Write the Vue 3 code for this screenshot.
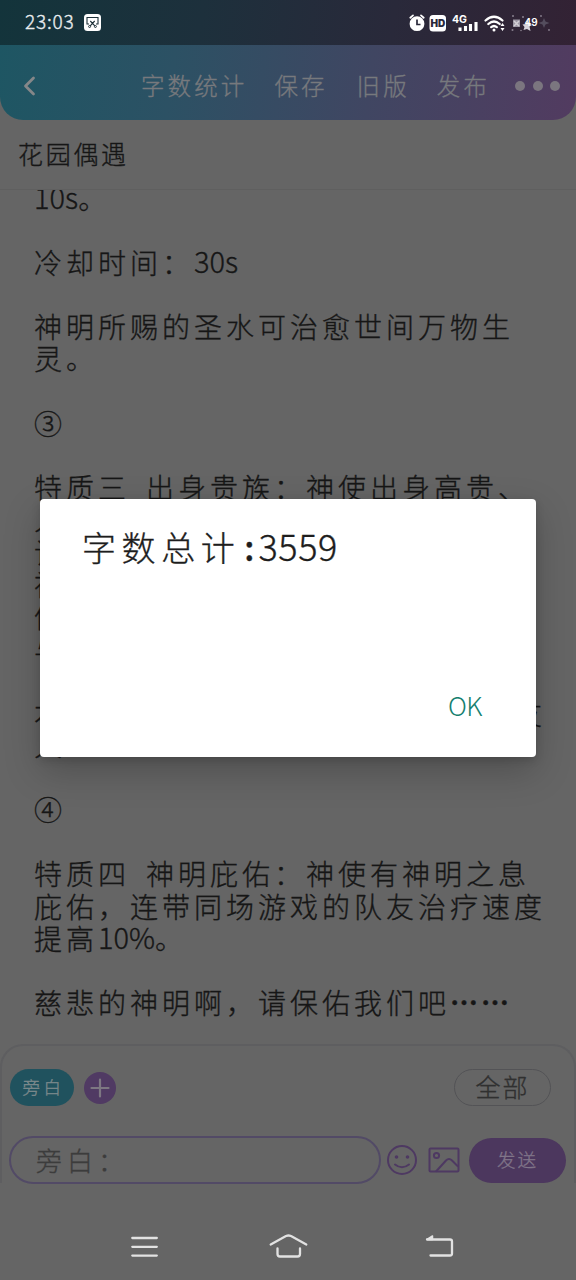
<script setup>
const actions = ['字数统计', '保存', '旧版', '发布']

// Each line is a list of runs; runs starting with "~" are set in the narrow Latin face.
const lines = [
  ['~10s', '。'],
  [],
  ['冷却时间：', '~30s'],
  [],
  ['神明所赐的圣水可治愈世间万物生'],
  ['灵。'],
  [],
  ['③'],
  [],
  ['特质三', '~ ', '出身贵族：神使出身高贵、'],
  ['人'],
  ['让'],
  ['神'],
  ['信'],
  ['与'],
  [],
  ['本次神使的祝福会降临在每一位队友'],
  ['人'],
  [],
  ['④'],
  [],
  ['特质四', '~ ', '神明庇佑：神使有神明之息'],
  ['庇佑，连带同场游戏的队友治疗速度'],
  ['提高', '~10%', '。'],
  [],
  ['慈悲的神明啊，请保佑我们吧', '……']
]
const isLatin = (run) => run.startsWith('~')
const textOf = (run) => (isLatin(run) ? run.slice(1) : run)
</script>

<template>
  <div class="screen">
    <div class="status">
      <span class="clock">23:03</span>
      <svg class="shot" width="17" height="17" viewBox="0 0 17 17">
        <rect width="17" height="17" rx="3.5" fill="#fff" />
        <path d="M5 10H3V3.5h11V10h-2M6.300 7l4.500 4.800M10.700 7l-4.500 4.800" fill="none" stroke="#1d3038" stroke-width="1.1" />
        <circle cx="5.600" cy="12.500" r="1" fill="none" stroke="#1d3038" />
        <circle cx="11.400" cy="12.500" r="1" fill="none" stroke="#1d3038" />
      </svg>
      <svg class="tray" width="145" height="20" viewBox="0 0 145 20">
        <circle cx="8" cy="10.700" r="7.400" fill="#fff" />
        <path d="M1.300 4.700 4 2.400M12 2.400l2.700 2.300" stroke="#fff" stroke-width="1.800" stroke-linecap="round" />
        <path d="M8 6.500v5h3.500" fill="none" stroke="#29283a" stroke-width="1.700" />
        <rect x="20.500" y="2" width="16.500" height="16.500" rx="3.500" fill="#fff" />
        <text x="28.800" y="14" text-anchor="middle" class="hd">HD</text>
        <text x="43" y="9.500" class="net">4G</text>
        <path d="M51 14.500v3.500M56.500 13V18M61.500 11v7M67 9v9" stroke="#fff" stroke-width="3.100" />
        <g fill="none" stroke="#fff" stroke-width="2.200" stroke-linecap="round">
          <path d="M76.500 7.500q8.500-7.500 17 0M79.300 11q5.700-5 11.400 0M82.200 14.200q2.800-2.400 5.600 0" />
        </g>
        <circle cx="85" cy="17" r="1.500" fill="#fff" />
        <path d="M93.500 10l2 3h-4zM93.500 18l2-3h-4z" fill="#fff" />
        <rect x="104" y="6.500" width="7" height="7.500" fill="#9a95a2" />
        <path d="M105 8l5 5M110 8l-5 5" stroke="#d2cfd5" stroke-width="1.500" />
        <g fill="#89818f">
          <circle cx="104" cy="3" r="1" /><circle cx="103.500" cy="17" r="1" />
          <circle cx="114" cy="4" r="1" /><circle cx="112" cy="17.500" r=".8" /><circle cx="132" cy="3" r=".9" />
          <circle cx="140" cy="17" r=".9" />
        </g>
        <path d="m118.500 7 1.500 3 3 2-2.500 1.500 1 4.500-3.500-2-3.500 1 1-3-2-2.500 3.500-.5z" fill="#d8d5dc" />
        <text x="115.500" y="12.500" class="pct">49</text>
        <path d="m135 5 1.500 3.500 4 1.500-4 1.500-1.500 3.500-1.500-3.500-4-1.500 4-1.500z" fill="#544d5d" />
      </svg>
    </div>

    <div class="header">
      <svg class="back" width="14" height="20" viewBox="0 0 14 20">
        <path d="M11.500 2 3.500 10l8 8" fill="none" stroke="#858789" stroke-width="2.800" stroke-linecap="round" stroke-linejoin="round" />
      </svg>
      <div class="actions">
        <span v-for="a in actions" :key="a">{{ a }}</span>
      </div>
      <div class="dots"><i></i><i></i><i></i></div>
    </div>

    <div class="title">花园偶遇</div>

    <div class="story">
      <div v-for="(line, i) in lines" :key="i" class="line">
        <span v-for="(run, j) in line" :key="j" :class="{ latin: isLatin(run), ell: run === '……' }">{{ textOf(run) }}</span>
      </div>
    </div>

    <div class="composer">
      <div class="roles">
        <span class="role">旁白</span>
        <svg width="32" height="32" viewBox="0 0 32 32">
          <circle cx="16" cy="16" r="16" fill="#503a63" />
          <path d="M7.500 16h17M16 7.500v17" stroke="#7d7782" stroke-width="2.200" stroke-linecap="round" />
        </svg>
        <span class="all">全部</span>
      </div>
      <div class="entry">
        <div class="field">旁白：</div>
        <svg class="smile" width="32" height="32" viewBox="0 0 32 32" fill="none" stroke="#4e3962" stroke-width="2">
          <circle cx="16" cy="16" r="14" />
          <path d="M9 20.500q7 5.500 14 0" stroke-linecap="round" />
          <circle cx="10.500" cy="13" r="1.800" fill="#4e3962" stroke="none" />
          <circle cx="21.500" cy="13" r="1.800" fill="#4e3962" stroke="none" />
        </svg>
        <svg class="photo" width="32" height="26" viewBox="0 0 32 26" fill="none" stroke="#4e3962" stroke-width="2">
          <rect x="1.500" y="1.500" width="29" height="23" rx="1" />
          <circle cx="8.500" cy="8.500" r="2.600" />
          <path d="M8 24.500 18 13.500q3-3 6 0l6 6" />
        </svg>
        <span class="send">发送</span>
      </div>
    </div>

    <div class="nav">
      <svg width="576" height="95" viewBox="0 0 576 95" fill="none" stroke="#e2e2e2" stroke-width="2.300" stroke-linecap="round" stroke-linejoin="round">
        <path d="M132.300 54h24.500M132.300 62.800h24.500M132.300 71.600h24.500" />
        <path d="M270.700 60.500 286 52q2.500-1 5 0l15.300 8.500M277.500 64.500V70q0 2.500 2.500 2.500h17.500q2.500 0 2.500-2.500v-5.500" />
        <path d="M427 55.500h23q2 0 2 2v12q0 2-2 2h-19.500" />
        <path d="M427 55.500l5.500-3.500v3.500z" fill="#e2e2e2" stroke-width="1.500" />
      </svg>
    </div>

    <div class="dialog">
      <div class="message">字数总计<b>:</b><span>3559</span></div>
      <div class="ok">OK</div>
    </div>
  </div>
</template>

<style>
body {
  background: #656565;
  overflow: hidden;
}
</style>

<style scoped>
.screen {
  position: relative;
  display: flex;
  flex-direction: column;
  width: 576px;
  height: 1280px;
  overflow: hidden;
  background: #656565;
  color: #161616;
  font-family: "Noto Sans CJK SC", sans-serif;
  font-weight: 300;
  white-space: nowrap;
  -webkit-text-stroke: 0.35px currentColor;
}
svg { -webkit-text-stroke: 0; }
.status {
  flex: none;
  display: flex;
  align-items: center;
  height: 45px;
  padding: 0 22px 0 25px;
  box-sizing: border-box;
  background: linear-gradient(97deg, #13343b 0%, #1d303c 35%, #29293a 68%, #332234 100%);
}
.clock {
  width: 59px;
  color: #e9edef;
  font-size: 19px;
  letter-spacing: 0.8px;
  line-height: 42px;
  margin-top: -3px;
}
.tray { margin-left: auto; }
.hd { font: 900 10px Inter, sans-serif; fill: #29283a; }
.net { font: 700 10.500px Inter, sans-serif; fill: #fff; }
.pct { font: 600 10px Inter, sans-serif; fill: #fff; }
.header {
  flex: none;
  display: flex;
  align-items: center;
  height: 75px;
  padding: 6px 16px 0 22px;
  box-sizing: border-box;
  border-radius: 0 0 23px 23px;
  background: linear-gradient(97deg, #1e5663 0%, #2c5164 30%, #404662 64%, #523b60 100%);
}
.actions {
  display: flex;
  gap: 27px;
  margin-left: 105px;
  margin-top: -2px;
  color: #77797d;
  font-size: 23.500px;
  letter-spacing: 3.100px;
}
.actions span:nth-child(3) { margin-left: 2px; }
.dots { display: flex; gap: 7.500px; margin-left: auto; }
.dots i { width: 10px; height: 10px; border-radius: 50%; background: #7b767f; }
.title {
  flex: none;
  height: 70px;
  box-sizing: border-box;
  padding-left: 18px;
  border-bottom: 1px solid #5f5f5f;
  font-size: 25px;
  letter-spacing: 2.700px;
  line-height: 67px;
}
.story {
  flex: none;
  height: 855px;
  padding-left: 34px;
  overflow: hidden;
  font-size: 28px;
  letter-spacing: 4px;
}
.line {
  display: flex;
  height: 32.200px;
  line-height: 32.200px;
}
.line:first-child { margin-top: -8.500px; }
.latin {
  font-size: 29px;
  letter-spacing: 0;
  line-height: 29px;
  white-space: pre;
  min-width: 16px;
}
.ell { letter-spacing: 3px; font-weight: 700; }
.composer {
  flex: none;
  height: 139px;
  margin-top: -1px;
  box-sizing: border-box;
  padding: 23px 8px 0 7px;
  border: 2px solid #5e5e60;
  border-bottom: 0;
  border-radius: 23px 23px 0 0;
}
.roles {
  display: flex;
  align-items: center;
  height: 37px;
}
.role {
  width: 64px;
  height: 37px;
  margin-left: 1px;
  margin-right: 10px;
  border-radius: 19px;
  background: #20525e;
  color: #7c898c;
  font-size: 17.500px;
  letter-spacing: 3.500px;
  line-height: 35px;
  text-indent: 3px;
  text-align: center;
}
.all {
  width: 97px;
  height: 37px;
  box-sizing: border-box;
  margin-left: auto;
  margin-right: 15px;
  border: 1px solid #535356;
  border-radius: 19px;
  color: #303030;
  font-size: 25px;
  letter-spacing: 2px;
  line-height: 33px;
  text-align: center;
}
.entry {
  display: flex;
  align-items: center;
  height: 48px;
  margin-top: 30px;
}
.field {
  width: 372px;
  height: 48px;
  box-sizing: border-box;
  border: 2px solid #524a66;
  border-radius: 24px;
  padding-left: 25px;
  color: #3c3c3c;
  font-size: 26px;
  letter-spacing: 5px;
  line-height: 43px;
}
.smile { margin-left: 5px; }
.photo { margin-left: 10px; }
.send {
  width: 97px;
  height: 45px;
  margin-left: auto;
  border-radius: 23px;
  background: #4c375e;
  color: #807589;
  font-size: 18.500px;
  letter-spacing: 2px;
  line-height: 43px;
  text-align: center;
}
.nav {
  flex: none;
  height: 96px;
  padding-top: 1px;
  box-sizing: border-box;
}
.nav svg { display: block; }
.dialog {
  position: absolute;
  left: 40px;
  top: 499px;
  width: 496px;
  height: 258px;
  display: flex;
  flex-direction: column;
  justify-content: space-between;
  box-sizing: border-box;
  padding: 17px 54px 30px 42px;
  border-radius: 4px;
  background: #fff;
  box-shadow: 0 14px 36px rgba(0, 0, 0, 0.22), 0 3px 8px rgba(0, 0, 0, 0.15);
}
.message {
  color: #1d1d1d;
  font-size: 34px;
  letter-spacing: 5.600px;
  line-height: 58px;
}
.message b {
  display: inline-block;
  width: 18px;
  letter-spacing: 0;
  font-weight: 500;
  text-align: center;
}
.message span { font-size: 36px; letter-spacing: 0.600px; }
.ok {
  align-self: flex-end;
  color: #16806f;
  font-size: 26px;
  line-height: 44px;
  letter-spacing: -0.5px;
  -webkit-text-stroke: 0;
}
</style>
